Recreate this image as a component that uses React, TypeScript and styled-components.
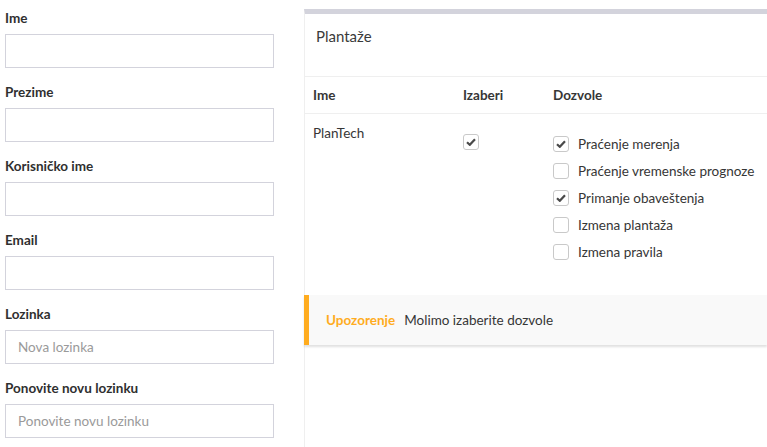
import * as React from "react";
import styled, { createGlobalStyle } from "styled-components";

const text = "#363636";
const line = "#d3d3dc";
const orange = "#ffac1f";

const GlobalStyle = createGlobalStyle`
  html, body {
    margin: 0;
    padding: 0;
    background: #fff;
    font-family: Lato, "Open Sans", sans-serif;
    color: ${text};
    overflow: hidden;
  }
`;

const Page = styled.div`
  display: grid;
  grid-template-columns: 269px 1fr;
  column-gap: 30px;
  padding-left: 5px;
  width: 767px;
  box-sizing: border-box;
`;

const Form = styled.div`
  display: flex;
  flex-direction: column;
  padding-top: 8px;
`;

const Field = styled.div`
  display: flex;
  flex-direction: column;
  margin-bottom: 14px;
`;

const Label = styled.label`
  font-size: 13.5px;
  font-weight: 700;
  line-height: 20px;
  margin-bottom: 6px;
  color: #2f2f2f;
`;

const Input = styled.input`
  height: 34px;
  box-sizing: border-box;
  border: 1px solid ${line};
  padding: 0 12px;
  font-family: inherit;
  font-size: 13.5px;
  color: ${text};
  outline: none;

  &::placeholder {
    color: #9a9a9a;
  }
`;

const Card = styled.div`
  margin-top: 9px;
  border-top: 5px solid ${line};
  border-left: 1px solid #efefef;
  display: flex;
  flex-direction: column;
`;

const CardTitle = styled.div`
  font-size: 15px;
  font-weight: 400;
  line-height: 20px;
  padding: 12px 11px 30px;
  border-bottom: 1px solid #efefef;
  color: #3a3a3a;
`;

const Row = styled.div<{ $head?: boolean }>`
  display: grid;
  grid-template-columns: 150px 90px 1fr;
  padding: ${(p) => (p.$head ? "8px 8px" : "9px 8px 33px")};
  border-bottom: ${(p) => (p.$head ? "1px solid #efefef" : "none")};
  font-size: 13.5px;
  font-weight: ${(p) => (p.$head ? 700 : 400)};
  line-height: 20px;
`;

const Cell = styled.div<{ $pad?: number }>`
  display: flex;
  flex-direction: column;
  align-items: flex-start;
  padding-top: ${(p) => p.$pad ?? 0}px;
`;

const PermList = styled.div`
  display: flex;
  flex-direction: column;
  gap: 7px;
`;

const Perm = styled.div`
  display: flex;
  align-items: center;
  gap: 9px;
  font-size: 13.5px;
  line-height: 20px;
`;

const Box = styled.span`
  width: 16px;
  height: 16px;
  box-sizing: border-box;
  border: 1px solid #c9c9c9;
  border-radius: 3px;
  display: inline-flex;
  align-items: center;
  justify-content: center;
  background: #fff;
  flex: none;
`;

const Alert = styled.div`
  display: flex;
  align-items: center;
  gap: 9px;
  height: 50px;
  background: #f9f9f9;
  border-left: 5px solid ${orange};
  margin-left: -1px;
  padding-left: 17px;
  box-shadow: 0 2px 2px rgba(0, 0, 0, 0.12);
  font-size: 13.5px;
`;

const AlertTitle = styled.span`
  color: ${orange};
  font-weight: 700;
`;

const Check = ({ on }: { on?: boolean }) => (
  <Box>
    {on && (
      <svg width="10" height="8" viewBox="0 0 10 8">
        <path d="M1 4.2 L3.8 6.8 L9 1.2" fill="none" stroke="#4a4a4a" strokeWidth="2.2" />
      </svg>
    )}
  </Box>
);

const fields = [
  { label: "Ime" },
  { label: "Prezime" },
  { label: "Korisničko ime" },
  { label: "Email" },
  { label: "Lozinka", placeholder: "Nova lozinka" },
  { label: "Ponovite novu lozinku", placeholder: "Ponovite novu lozinku" },
];

const perms = [
  { name: "Praćenje merenja", on: true },
  { name: "Praćenje vremenske prognoze", on: false },
  { name: "Primanje obaveštenja", on: true },
  { name: "Izmena plantaža", on: false },
  { name: "Izmena pravila", on: false },
];

export default function App() {
  return (
    <>
      <GlobalStyle />
      <Page>
        <Form>
          {fields.map((f) => (
            <Field key={f.label}>
              <Label>{f.label}</Label>
              <Input placeholder={f.placeholder} type={f.placeholder ? "password" : "text"} />
            </Field>
          ))}
        </Form>

        <Card>
          <CardTitle>Plantaže</CardTitle>
          <Row $head>
            <Cell>Ime</Cell>
            <Cell>Izaberi</Cell>
            <Cell>Dozvole</Cell>
          </Row>
          <Row>
            <Cell>PlanTech</Cell>
            <Cell $pad={11}>
              <Check on />
            </Cell>
            <Cell $pad={11}>
              <PermList>
                {perms.map((p) => (
                  <Perm key={p.name}>
                    <Check on={p.on} />
                    <span>{p.name}</span>
                  </Perm>
                ))}
              </PermList>
            </Cell>
          </Row>
          <Alert>
            <AlertTitle>Upozorenje</AlertTitle>
            <span>Molimo izaberite dozvole</span>
          </Alert>
        </Card>
      </Page>
    </>
  );
}
